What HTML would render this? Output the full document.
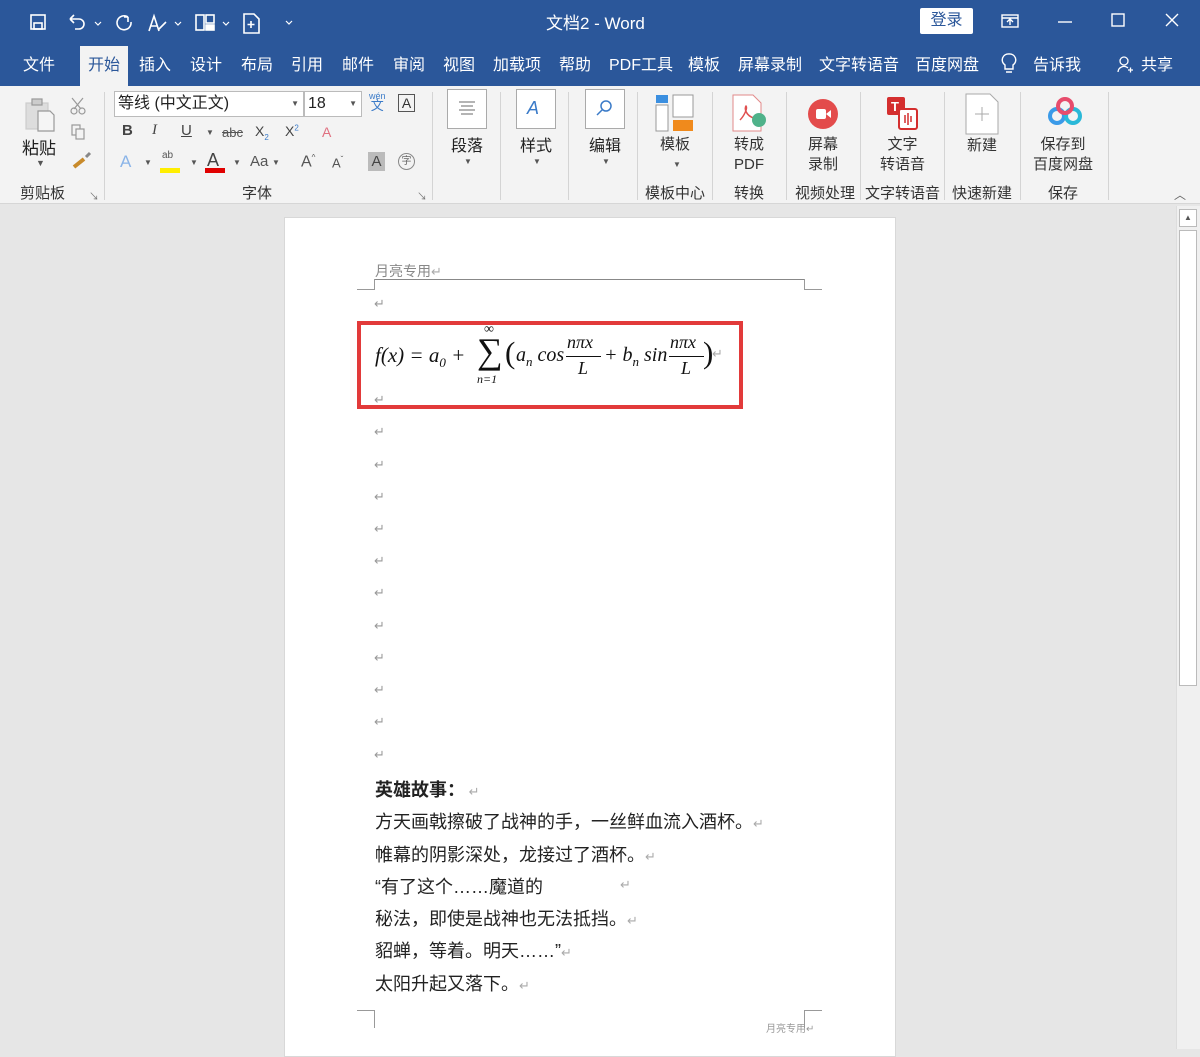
<!DOCTYPE html>
<html><head><meta charset="utf-8"><style>
*{margin:0;padding:0;box-sizing:border-box}
body{width:1200px;height:1049px;overflow:hidden;background:#e6e6e6;font-family:"Liberation Sans","Noto Sans CJK SC",sans-serif;position:relative}
.a{position:absolute;white-space:nowrap}
.t{color:#fff;font-size:16px;top:51px}
.g{font-size:15px;color:#333;top:182px}
.b{font-size:15px;color:#333;text-align:center;line-height:20px}
.sep{position:absolute;top:92px;width:1px;height:108px;background:#d4d4d4}
.ret{position:absolute;left:374px;color:#999;font-size:13px}
.p{position:absolute;left:375px;font-size:18px;color:#222}
.r{color:#aaa;font-size:13px}
.m{font-family:"Liberation Serif",serif;font-style:italic}
.n{font-family:"Liberation Serif",serif}
</style></head><body>
<div class="a" style="left:0;top:0;width:1200px;height:86px;background:#2b579a"></div>
<svg class="a" style="left:28px;top:11px" width="280" height="24" viewBox="0 0 280 24" fill="none" stroke="#fff" stroke-width="1.6">
<rect x="3" y="4" width="14" height="14"/><rect x="6" y="12" width="8" height="6"/>
<path d="M42 8h9a5 5 0 010 10h-4M42 8l4-4M42 8l4 4"/><path d="M67 11l3 3 3-3" stroke-width="1.2"/>
<path d="M100 6a7 7 0 10 3 5M100 6v5M100 6h-4"/>
<path d="M121 20l5-15 5 15M123 15h6M130 19l8-8"/><path d="M147 11l3 3 3-3" stroke-width="1.2"/>
<rect x="168" y="4" width="8" height="15"/><rect x="178" y="4" width="8" height="8"/><rect x="178" y="14" width="8" height="5" fill="#fff"/><path d="M195 11l3 3 3-3" stroke-width="1.2"/>
<path d="M216 3h10l5 5v14h-15z"/><path d="M223 10v7M219.5 13.5h7"/>
<path d="M258 10l3 3 3-3" stroke-width="1.2"/></svg>
<div class="a" style="left:546px;top:9px;color:#fff;font-size:17px">文档2 - Word</div>
<div class="a" style="left:920px;top:8px;width:53px;height:26px;background:#fff;border-radius:2px;color:#2b579a;font-size:16px;text-align:center;line-height:26px">登录</div>
<svg class="a" style="left:1000px;top:12px" width="190" height="20" fill="none" stroke="#fff" stroke-width="1.4"><rect x="2" y="3" width="16" height="12"/><path d="M2 6h16M10 13v-5M7 10l3-3 3 3"/><path d="M58 10h14"/><rect x="112" y="2" width="12" height="12"/><path d="M166 2l12 12M178 2l-12 12"/></svg>
<div class="a" style="left:80px;top:46px;width:48px;height:42px;background:#f3f3f3"></div>
<div class="a t" style="left:23px">文件</div>
<div class="a t" style="left:88px;color:#2b579a">开始</div>
<div class="a t" style="left:139px">插入</div>
<div class="a t" style="left:190px">设计</div>
<div class="a t" style="left:241px">布局</div>
<div class="a t" style="left:291px">引用</div>
<div class="a t" style="left:342px">邮件</div>
<div class="a t" style="left:393px">审阅</div>
<div class="a t" style="left:443px">视图</div>
<div class="a t" style="left:493px">加载项</div>
<div class="a t" style="left:559px">帮助</div>
<div class="a t" style="left:609px">PDF工具</div>
<div class="a t" style="left:688px">模板</div>
<div class="a t" style="left:738px">屏幕录制</div>
<div class="a t" style="left:819px">文字转语音</div>
<div class="a t" style="left:915px">百度网盘</div>
<svg class="a" style="left:1000px;top:52px" width="18" height="24" fill="none" stroke="#fff" stroke-width="1.4"><path d="M9 2a6 6 0 00-4 11v4h8v-4A6 6 0 009 2zM6 20h6"/></svg>
<div class="a t" style="left:1033px">告诉我</div>
<svg class="a" style="left:1116px;top:55px" width="18" height="20" fill="none" stroke="#fff" stroke-width="1.3"><circle cx="8" cy="6" r="4"/><path d="M2 17a6 6 0 0110-4M12 15h5M14.5 12.5v5"/></svg>
<div class="a t" style="left:1141px">共享</div>
<div class="a" style="left:0;top:86px;width:1200px;height:118px;background:#f3f3f3;border-bottom:1px solid #d6d6d6"></div>
<div class="sep" style="left:104px"></div><div class="sep" style="left:432px"></div><div class="sep" style="left:500px"></div><div class="sep" style="left:568px"></div><div class="sep" style="left:637px"></div><div class="sep" style="left:712px"></div><div class="sep" style="left:786px"></div><div class="sep" style="left:860px"></div><div class="sep" style="left:944px"></div><div class="sep" style="left:1020px"></div><div class="sep" style="left:1108px"></div>
<svg class="a" style="left:22px;top:95px" width="80" height="80" fill="none" stroke="#999" stroke-width="1.2">
<rect x="4" y="8" width="22" height="26" fill="#ddd" stroke="#ccc"/><rect x="10" y="4" width="10" height="6" fill="#ccc"/><path d="M16 16h12l4 4v16H16z" fill="#f5f5f5"/>
<circle cx="52" cy="16" r="3"/><circle cx="60" cy="16" r="3"/><path d="M50 3l9 11M61 3l-9 11"/>
<rect x="50" y="30" width="8" height="10"/><rect x="54" y="34" width="8" height="10" fill="#f3f3f3"/>
<path d="M52 72l10-8" stroke="#c88a2a" stroke-width="4"/><path d="M64 62l4-4" stroke="#888" stroke-width="3"/></svg>
<div class="a" style="left:22px;top:134px;font-size:17px;color:#222">粘贴</div>
<div class="a" style="left:36px;top:158px;font-size:9px;color:#555">▼</div>
<div class="a g" style="left:20px">剪贴板</div>
<div class="a" style="left:89px;top:188px;font-size:10px;color:#777">↘</div>
<div class="a" style="left:114px;top:91px;width:190px;height:26px;background:#fff;border:1px solid #bbb;font-size:16px;line-height:24px;padding-left:3px;color:#222">等线 (中文正文)<span style="position:absolute;right:4px;font-size:8px;color:#555">▼</span></div>
<div class="a" style="left:304px;top:91px;width:58px;height:26px;background:#fff;border:1px solid #bbb;font-size:16px;line-height:24px;padding-left:3px;color:#222">18<span style="position:absolute;right:4px;font-size:8px;color:#555">▼</span></div>
<div class="a" style="left:369px;top:92px;font-size:9px;color:#3b7bc8;line-height:9px;text-align:center">wén<br><span style="font-size:13px">文</span></div>
<div class="a" style="left:398px;top:94px;width:17px;height:18px;border:1px solid #555;font-size:14px;text-align:center;line-height:16px;color:#333">A</div>
<div class="a" style="left:122px;top:122px;font-size:15px;color:#444;font-weight:bold">B</div>
<div class="a" style="left:152px;top:122px;font-size:15px;color:#444;font-style:italic;font-family:'Liberation Serif',serif">I</div>
<div class="a" style="left:181px;top:122px;font-size:15px;color:#444;text-decoration:underline">U</div>
<div class="a" style="left:206px;top:128px;font-size:8px;color:#555">▼</div>
<div class="a" style="left:222px;top:125px;font-size:13px;color:#555;text-decoration:line-through">abc</div>
<div class="a" style="left:255px;top:123px;font-size:14px;color:#444">X<sub style="font-size:8px;color:#3b7bc8">2</sub></div>
<div class="a" style="left:285px;top:123px;font-size:14px;color:#444">X<sup style="font-size:8px;color:#3b7bc8">2</sup></div>
<div class="a" style="left:322px;top:124px;font-size:14px;color:#e07080">A</div>
<div class="a" style="left:120px;top:152px;font-size:17px;color:#8ab4e8">A</div>
<div class="a" style="left:144px;top:158px;font-size:8px;color:#555">▼</div>
<div class="a" style="left:160px;top:168px;width:20px;height:5px;background:#ffee00"></div>
<div class="a" style="left:162px;top:150px;font-size:10px;color:#555">ab</div>
<div class="a" style="left:190px;top:158px;font-size:8px;color:#555">▼</div>
<div class="a" style="left:207px;top:150px;font-size:18px;color:#444">A</div>
<div class="a" style="left:205px;top:168px;width:20px;height:5px;background:#e00000"></div>
<div class="a" style="left:233px;top:158px;font-size:8px;color:#555">▼</div>
<div class="a" style="left:250px;top:153px;font-size:15px;color:#555">Aa</div>
<div class="a" style="left:272px;top:158px;font-size:8px;color:#555">▼</div>
<div class="a" style="left:301px;top:153px;font-size:16px;color:#555">A<sup style="font-size:8px">^</sup></div>
<div class="a" style="left:332px;top:155px;font-size:13px;color:#555">A<sup style="font-size:8px">ˇ</sup></div>
<div class="a" style="left:368px;top:152px;width:17px;height:19px;background:#bbb;font-size:15px;text-align:center;color:#444;line-height:19px">A</div>
<div class="a" style="left:398px;top:153px;width:17px;height:17px;border:1px solid #888;border-radius:50%;font-size:10px;text-align:center;color:#666;line-height:15px">字</div>
<div class="a g" style="left:242px">字体</div>
<div class="a" style="left:417px;top:188px;font-size:10px;color:#777">↘</div>
<div class="a" style="left:447px;top:89px;width:40px;height:40px;border:1px solid #aaa;background:#fff"></div>
<svg class="a" style="left:458px;top:100px" width="18" height="18" stroke="#888" stroke-width="1.2"><path d="M1 2h16M3 6h12M1 10h16M3 14h12"/></svg>
<div class="a" style="left:451px;top:132px;font-size:16px;color:#222">段落</div><div class="a" style="left:464px;top:157px;font-size:8px;color:#555">▼</div>
<div class="a" style="left:516px;top:89px;width:40px;height:40px;border:1px solid #aaa;background:#fff"></div>
<div class="a" style="left:527px;top:98px;font-size:18px;color:#3b7bc8;font-style:italic">A</div>
<div class="a" style="left:520px;top:132px;font-size:16px;color:#222">样式</div><div class="a" style="left:533px;top:157px;font-size:8px;color:#555">▼</div>
<div class="a" style="left:585px;top:89px;width:40px;height:40px;border:1px solid #aaa;background:#fff"></div>
<svg class="a" style="left:596px;top:99px" width="18" height="18" fill="none" stroke="#3b7bc8" stroke-width="1.5"><circle cx="10" cy="7" r="5"/><path d="M6 11l-5 5"/></svg>
<div class="a" style="left:589px;top:132px;font-size:16px;color:#222">编辑</div><div class="a" style="left:602px;top:157px;font-size:8px;color:#555">▼</div>
<svg class="a" style="left:655px;top:93px" width="42" height="42"><rect x="1" y="2" width="12" height="8" fill="#3b8fe0"/><rect x="1" y="12" width="12" height="26" fill="#fff" stroke="#999"/><rect x="18" y="2" width="20" height="22" fill="#fff" stroke="#999"/><rect x="18" y="27" width="20" height="11" fill="#f08a1c"/></svg>
<div class="a b" style="left:660px;top:135px">模板</div><div class="a" style="left:673px;top:160px;font-size:8px;color:#555">▼</div>
<div class="a g" style="left:645px">模板中心</div>
<svg class="a" style="left:730px;top:94px" width="40" height="40" fill="none"><path d="M3 1h20l8 8v28H3z" fill="#fff" stroke="#e28a8a"/><path d="M10 26c4-4 8-12 6-14-2 2 0 10 8 12" stroke="#e05050" stroke-width="1.5"/><circle cx="29" cy="26" r="7" fill="#4fb28a"/></svg>
<div class="a b" style="left:734px;top:135px">转成<br>PDF</div>
<div class="a g" style="left:734px">转换</div>
<svg class="a" style="left:806px;top:97px" width="34" height="34"><circle cx="17" cy="17" r="15" fill="#e34b4b"/><rect x="10" y="12" width="10" height="10" rx="2" fill="#fff"/><path d="M20 17l5-4v8z" fill="#fff"/></svg>
<div class="a b" style="left:808px;top:135px">屏幕<br>录制</div>
<div class="a g" style="left:795px">视频处理</div>
<svg class="a" style="left:885px;top:95px" width="36" height="36"><rect x="2" y="2" width="18" height="18" rx="2" fill="#d42e2e"/><text x="6" y="16" fill="#fff" font-size="13" font-weight="bold" font-family="Liberation Sans">T</text><rect x="14" y="14" width="18" height="20" rx="2" fill="#fff" stroke="#d42e2e" stroke-width="2"/><path d="M20 20v8M23 18v12M26 21v6" stroke="#d42e2e" stroke-width="1.5"/></svg>
<div class="a b" style="left:880px;top:135px">文字<br>转语音</div>
<div class="a g" style="left:865px">文字转语音</div>
<svg class="a" style="left:964px;top:93px" width="36" height="42" fill="none" stroke="#aaa"><path d="M2 1h24l8 8v32H2z" fill="#fff"/><path d="M18 14v14M11 21h14"/></svg>
<div class="a b" style="left:967px;top:136px">新建</div>
<div class="a g" style="left:952px">快速新建</div>
<svg class="a" style="left:1045px;top:96px" width="40" height="32" fill="none" stroke-width="4"><circle cx="12" cy="20" r="7" stroke="#3a9ae8"/><circle cx="28" cy="20" r="7" stroke="#2ab8d8"/><circle cx="20" cy="10" r="7" stroke="#e74c6c"/></svg>
<div class="a b" style="left:1033px;top:135px">保存到<br>百度网盘</div>
<div class="a g" style="left:1048px">保存</div>
<div class="a" style="left:1174px;top:186px;font-size:12px;color:#666">︿</div>
<div class="a" style="left:1176px;top:206px;width:24px;height:843px;background:#f0f0f0;border-left:1px solid #ddd"></div>
<div class="a" style="left:1179px;top:209px;width:18px;height:18px;border:1px solid #bbb;background:#fff;font-size:8px;text-align:center;line-height:16px;color:#555">▲</div>
<div class="a" style="left:1179px;top:230px;width:18px;height:456px;border:1px solid #bbb;background:#fff"></div>
<div class="a" style="left:284px;top:217px;width:612px;height:840px;background:#fff;border:1px solid #d8d8d8"></div>
<div class="a" style="left:375px;top:261px;font-size:14px;color:#888">月亮专用<span class="r">↵</span></div>
<div class="a" style="left:374px;top:279px;width:430px;height:1px;background:#888"></div>
<div class="a" style="left:374px;top:279px;width:1px;height:10px;background:#999"></div>
<div class="a" style="left:357px;top:289px;width:18px;height:1px;background:#999"></div>
<div class="a" style="left:804px;top:279px;width:1px;height:10px;background:#999"></div>
<div class="a" style="left:804px;top:289px;width:18px;height:1px;background:#999"></div>
<div class="ret" style="top:296px">↵</div>
<div class="ret" style="top:392px">↵</div>
<div class="ret" style="top:424px">↵</div><div class="ret" style="top:457px">↵</div><div class="ret" style="top:489px">↵</div><div class="ret" style="top:521px">↵</div><div class="ret" style="top:553px">↵</div><div class="ret" style="top:585px">↵</div><div class="ret" style="top:618px">↵</div><div class="ret" style="top:650px">↵</div><div class="ret" style="top:682px">↵</div><div class="ret" style="top:714px">↵</div><div class="ret" style="top:747px">↵</div>
<div class="a" style="left:357px;top:321px;width:386px;height:88px;border:4px solid #e23a3a"></div>
<div class="a m" style="left:375px;top:343px;font-size:21px;color:#111">f<span class="n">(</span>x<span class="n">) = </span>a<sub class="n" style="font-size:13px">0</sub><span class="n"> +</span></div>
<div class="a n" style="left:484px;top:322px;font-size:14px;color:#111">∞</div>
<div class="a n" style="left:477px;top:333px;font-size:36px;color:#111;line-height:36px">∑</div>
<div class="a m" style="left:477px;top:372px;font-size:12px;color:#111">n<span class="n">=1</span></div>
<div class="a n" style="left:505px;top:335px;font-size:31px;color:#111">(</div>
<div class="a m" style="left:516px;top:344px;font-size:20px;color:#111">a<sub style="font-size:13px">n</sub> <span class="n">cos</span></div>
<div class="a m" style="left:567px;top:332px;font-size:18px;color:#111">nπx</div>
<div class="a" style="left:566px;top:356px;width:35px;height:1px;background:#111"></div>
<div class="a m" style="left:578px;top:358px;font-size:18px;color:#111">L</div>
<div class="a m" style="left:604px;top:344px;font-size:20px;color:#111"><span class="n">+ </span>b<sub style="font-size:13px">n</sub> <span class="n">sin</span></div>
<div class="a m" style="left:670px;top:332px;font-size:18px;color:#111">nπx</div>
<div class="a" style="left:669px;top:356px;width:35px;height:1px;background:#111"></div>
<div class="a m" style="left:681px;top:358px;font-size:18px;color:#111">L</div>
<div class="a n" style="left:703px;top:335px;font-size:31px;color:#111">)</div>
<div class="a r" style="left:712px;top:346px">↵</div>
<div class="p" style="top:776px;font-weight:bold">英雄故事：<span class="r" style="font-weight:normal"> ↵</span></div>
<div class="p" style="top:808px">方天画戟擦破了战神的手，一丝鲜血流入酒杯。<span class="r">↵</span></div>
<div class="p" style="top:841px">帷幕的阴影深处，龙接过了酒杯。<span class="r">↵</span></div>
<div class="p" style="top:873px">“有了这个……魔道的</div><div class="a r" style="left:620px;top:877px">↵</div>
<div class="p" style="top:905px">秘法，即使是战神也无法抵挡。<span class="r">↵</span></div>
<div class="p" style="top:937px">貂蝉，等着。明天……”<span class="r">↵</span></div>
<div class="p" style="top:970px">太阳升起又落下。<span class="r">↵</span></div>
<div class="a" style="left:357px;top:1010px;width:18px;height:1px;background:#999"></div>
<div class="a" style="left:374px;top:1010px;width:1px;height:18px;background:#999"></div>
<div class="a" style="left:804px;top:1010px;width:18px;height:1px;background:#999"></div>
<div class="a" style="left:804px;top:1010px;width:1px;height:18px;background:#999"></div>
<div class="a" style="left:766px;top:1020px;font-size:10px;color:#999">月亮专用↵</div>
</body></html>
